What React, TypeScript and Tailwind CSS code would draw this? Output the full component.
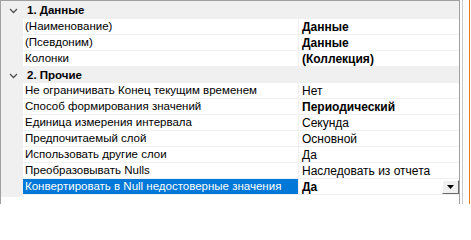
import React from "react";

type Row =
  | { kind: "cat"; title: string }
  | { kind: "prop"; label: string; value: string; bold?: boolean; selected?: boolean };

const rows: Row[] = [
  { kind: "cat", title: "1. Данные" },
  { kind: "prop", label: "(Наименование)", value: "Данные", bold: true },
  { kind: "prop", label: "(Псевдоним)", value: "Данные", bold: true },
  { kind: "prop", label: "Колонки", value: "(Коллекция)", bold: true },
  { kind: "cat", title: "2. Прочие" },
  { kind: "prop", label: "Не ограничивать Конец текущим временем", value: "Нет" },
  { kind: "prop", label: "Способ формирования значений", value: "Периодический", bold: true },
  { kind: "prop", label: "Единица измерения интервала", value: "Секунда" },
  { kind: "prop", label: "Предпочитаемый слой", value: "Основной" },
  { kind: "prop", label: "Использовать другие слои", value: "Да" },
  { kind: "prop", label: "Преобразовывать Nulls", value: "Наследовать из отчета" },
  {
    kind: "prop",
    label: "Конвертировать в Null недостоверные значения",
    value: "Да",
    bold: true,
    selected: true,
  },
];

function Chevron() {
  return (
    <svg width="9" height="6" viewBox="0 0 9 6" className="shrink-0">
      <polyline points="1,1 4.5,4.5 8,1" fill="none" stroke="#505050" strokeWidth="1.3" />
    </svg>
  );
}

function DropButton() {
  return (
    <div className="ml-auto flex h-[14px] w-[17px] items-center justify-center border-t border-l border-t-white border-l-white border-r border-b border-r-[#696969] border-b-[#696969] bg-[#f0f0f0]">
      <svg width="7" height="4" viewBox="0 0 7 4">
        <polygon points="0,0 7,0 3.5,4" fill="#000" />
      </svg>
    </div>
  );
}

export default function App() {
  return (
    <div className="flex h-[204px] w-[471px] bg-white font-['Liberation_Sans',sans-serif] text-[11.5px] leading-none text-black">
      <div className="flex h-full w-[460px] flex-col border-t border-l border-r border-[#a0a0a0] bg-white">
        {rows.map((row, i) =>
          row.kind === "cat" ? (
            <div
              key={i}
              className={`flex items-center bg-[#f0f0f0] pt-px ${i === 0 ? "h-[18px]" : "h-[16px]"}`}
            >
              <div className="flex w-[26px] justify-center pl-[1px] pr-[3px]">
                <Chevron />
              </div>
              <span className="font-bold">{row.title}</span>
            </div>
          ) : (
            <div key={i} className="flex h-[16px] border-b border-[#f0f0f0]">
              <div className="w-[22px] bg-[#f0f0f0]" />
              <div
                className={`flex w-[275px] items-center overflow-hidden whitespace-nowrap pl-[2px] pt-px ${
                  row.selected ? "bg-[#0078d7] text-white" : ""
                }`}
              >
                {row.label}
              </div>
              <div className="w-px bg-[#f0f0f0]" />
              <div className="flex flex-1 items-center whitespace-nowrap pl-[3px] text-[12px]">
                <span className={`pt-px ${row.bold ? "font-bold" : ""}`}>{row.value}</span>
                {row.selected && <DropButton />}
              </div>
            </div>
          )
        )}
        <div className="h-[2px] w-[22px] bg-[#f0f0f0]" />
      </div>
      <div className="w-[2px]" />
      <div className="h-full w-px bg-[#c8c8c8]" />
      <div className="w-[6px]" />
      <div className="h-full w-px bg-[#e87d1e]" />
    </div>
  );
}
